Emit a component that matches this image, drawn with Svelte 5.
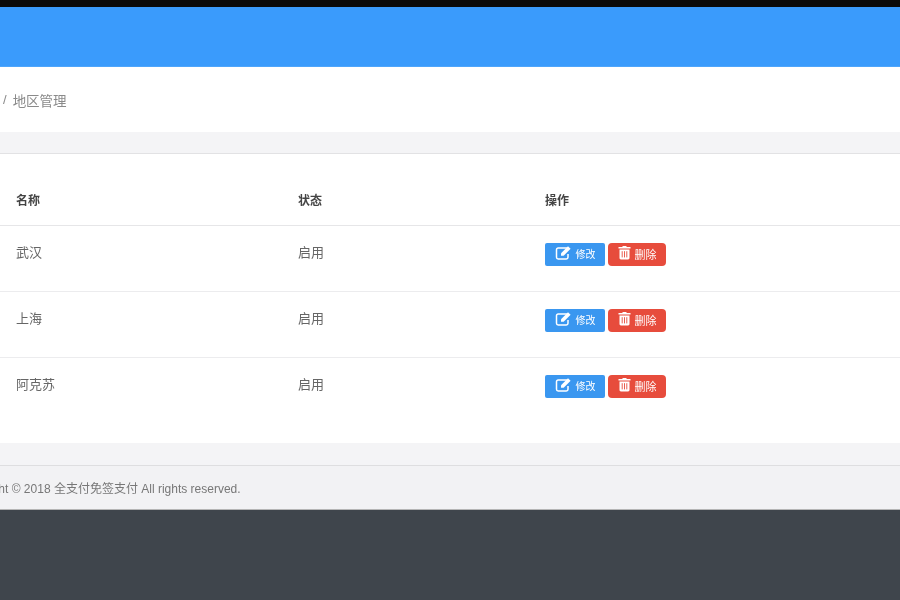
<script>
  const rows = [
    { name: '武汉', status: '启用' },
    { name: '上海', status: '启用' },
    { name: '阿克苏', status: '启用' }
  ];
</script>

<div class="page">
  <div class="topline"></div>
  <header class="navbar"></header>
  <nav class="breadcrumb">
    <span class="crumb-home">首页</span>
    <span class="sep">/</span>
    <span class="current">地区管理</span>
  </nav>
  <main class="content">
    <section class="card">
      <table>
        <thead>
          <tr>
            <th>名称</th>
            <th>状态</th>
            <th>操作</th>
          </tr>
        </thead>
        <tbody>
          {#each rows as row}
            <tr>
              <td>{row.name}</td>
              <td>{row.status}</td>
              <td>
                <div class="actions">
                  <button class="btn btn-edit">
                    <svg width="17" height="15" viewBox="0 0 17 15" aria-hidden="true">
                      <path d="M12 3H3.2C2.2 3 1.5 3.7 1.5 4.7v7.6c0 1 .7 1.7 1.7 1.7h8.1c1 0 1.7-.7 1.7-1.7V9" fill="none" stroke="currentColor" stroke-width="1.5" />
                      <path d="M6 8.2 13 1.2l2.6 2.6-7 7H6z" fill="currentColor" />
                    </svg>
                    <span>修改</span>
                  </button>
                  <button class="btn btn-delete">
                    <svg width="13" height="15" viewBox="0 0 13 15" aria-hidden="true">
                      <path d="M4.5 2V1h4v1h4v1.6H.5V2z" fill="currentColor" />
                      <path d="M1.5 4.5h10V13c0 .8-.6 1.4-1.4 1.4H2.9c-.8 0-1.4-.6-1.4-1.4z" fill="currentColor" />
                      <path d="M4.2 6.2v6.2M6.5 6.2v6.2M8.8 6.2v6.2" stroke="#e74c3c" stroke-width=".9" />
                    </svg>
                    <span>删除</span>
                  </button>
                </div>
              </td>
            </tr>
          {/each}
        </tbody>
      </table>
    </section>
  </main>
  <footer class="footer">
    <span>Copyright © 2018 全支付免签支付 All rights reserved.</span>
  </footer>
  <div class="backdrop"></div>
</div>

<style>
  :global(body) {
    margin: 0;
    background: #3f454c;
  }

  .page {
    width: 900px;
    height: 600px;
    overflow: hidden;
    display: flex;
    flex-direction: column;
    font-family: "Liberation Sans", "Noto Sans CJK SC", sans-serif;
    font-size: 13px;
    color: #555;
  }

  .topline {
    height: 7px;
    background: #0b0b0b;
  }

  .navbar {
    height: 60px;
    background: #3a9bfc;
    border-bottom: 1px solid #4ea5fb;
    box-sizing: border-box;
  }

  .breadcrumb {
    height: 65px;
    background: #fff;
    display: flex;
    align-items: center;
    gap: 6px;
    margin-left: -30px;
    color: #8a8a8a;
    filter: blur(0.6px);
  }

  .crumb-home {
    width: 27px;
  }

  .current {
    font-size: 13.5px;
  }

  .content {
    height: 333px;
    box-sizing: border-box;
    padding: 21px 0 22px;
    background: #f4f4f6;
  }

  .card {
    height: 100%;
    box-sizing: border-box;
    background: #fff;
    border-top: 1px solid #e2e2e4;
    padding-top: 25px;
  }

  table {
    width: 100%;
    border-collapse: collapse;
    table-layout: fixed;
    filter: blur(0.6px);
  }

  th:nth-child(1),
  td:nth-child(1) {
    width: 282px;
  }

  th:nth-child(2),
  td:nth-child(2) {
    width: 247px;
  }

  th,
  td {
    padding: 0 0 0 16px;
    text-align: left;
  }

  th {
    height: 46px;
    padding-bottom: 5px;
    box-sizing: border-box;
    font-size: 12px;
    font-weight: 700;
    color: #444;
    border-bottom: 1px solid #e6e6e8;
  }

  td {
    height: 66px;
    box-sizing: border-box;
    border-bottom: 1px solid #ececee;
    color: #666;
    padding-bottom: 14px;
  }

  tbody tr:last-child td {
    border-bottom: 0;
  }

  .actions {
    display: flex;
    gap: 3px;
    padding-top: 6px;
  }

  .btn {
    height: 23px;
    border: 0;
    border-radius: 2px;
    padding: 0;
    display: flex;
    align-items: center;
    justify-content: center;
    gap: 4px;
    color: #fff;
    font-family: inherit;
    font-size: 10px;
  }

  .btn svg {
    margin-bottom: 3px;
  }

  .btn span {
    margin-bottom: 1px;
  }

  .btn-edit {
    width: 60px;
    background: #3a97f0;
  }

  .btn-delete {
    width: 58px;
    gap: 4px;
    background: #e74c3c;
    border-radius: 4px;
    font-size: 11px;
  }

  .footer {
    height: 45px;
    box-sizing: border-box;
    background: #f2f2f4;
    border-top: 1px solid #dedee0;
    border-bottom: 1px solid #b5b5b5;
    display: flex;
    align-items: center;
    font-size: 12px;
    color: #777;
    white-space: nowrap;
  }

  .footer span {
    margin-left: -43px;
    filter: blur(0.6px);
  }

  .backdrop {
    flex: 1;
    background: #3f454c;
  }
</style>
